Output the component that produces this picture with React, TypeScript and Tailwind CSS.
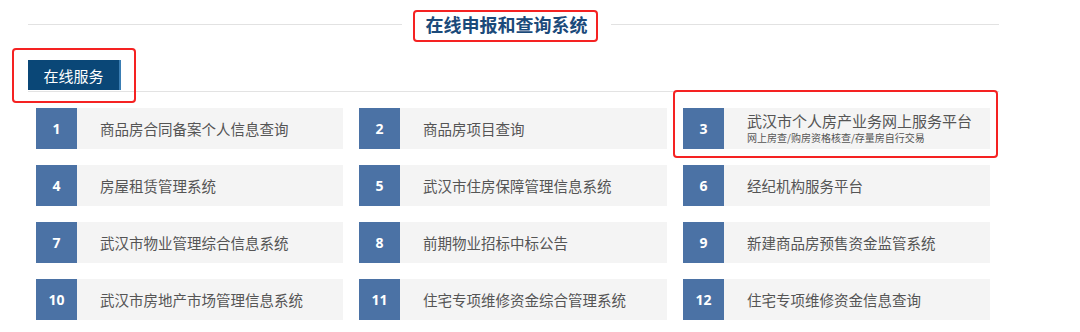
import React from "react";

const items: { n: number; t: string; sub?: string }[] = [
  { n: 1, t: "商品房合同备案个人信息查询" },
  { n: 2, t: "商品房项目查询" },
  { n: 3, t: "武汉市个人房产业务网上服务平台", sub: "网上房查/购房资格核查/存量房自行交易" },
  { n: 4, t: "房屋租赁管理系统" },
  { n: 5, t: "武汉市住房保障管理信息系统" },
  { n: 6, t: "经纪机构服务平台" },
  { n: 7, t: "武汉市物业管理综合信息系统" },
  { n: 8, t: "前期物业招标中标公告" },
  { n: 9, t: "新建商品房预售资金监管系统" },
  { n: 10, t: "武汉市房地产市场管理信息系统" },
  { n: 11, t: "住宅专项维修资金综合管理系统" },
  { n: 12, t: "住宅专项维修资金信息查询" },
];

export default function App() {
  return (
    <div
      className="relative w-[1080px] h-[332px] bg-white overflow-hidden"
      style={{ fontFamily: '"Microsoft YaHei", "Noto Sans CJK SC", "Noto Sans", sans-serif' }}
    >
      {/* Header */}
      <div className="flex items-center ml-[28px] w-[971px] pt-[12px] h-[36px]">
        <div className="w-[374px] h-px bg-[#e2e2e2]" />
        <div className="w-[209px] flex justify-center">
          <span className="text-[18px] leading-[24px] font-bold text-[#1b4a7a]">在线申报和查询系统</span>
        </div>
        <div className="flex-1 h-px bg-[#e2e2e2]" />
      </div>

      {/* Tab */}
      <div className="ml-[28px] w-[971px] mt-[24px] border-b border-[#e3e3e3]">
        <div className="w-[93px] h-[30px] bg-[#0a4777] border-r-2 border-[#3a7db3] flex items-center justify-center text-white text-[15px] leading-none mb-[1px]">
          在线服务
        </div>
      </div>

      {/* Grid */}
      <div className="ml-[36px] mt-[16px] grid grid-cols-[307px_308px_307px] gap-x-[16px] gap-y-[16px]">
        {items.map((it) => (
          <div key={it.n} className="flex h-[41px] bg-[#f4f4f4]">
            <div
              className="w-[41px] h-[41px] bg-[#4b72a5] flex items-center justify-center text-white text-[14px] font-bold"
              style={{ fontFamily: '"Open Sans", "Noto Sans", sans-serif' }}
            >
              {it.n}
            </div>
            {it.sub ? (
              <div className="pl-[23px] flex flex-col justify-center pb-[1px]">
                <div className="text-[15px] leading-[18px] text-[#555]">{it.t}</div>
                <div className="text-[10px] leading-[12px] mt-[2px] text-[#555]">{it.sub}</div>
              </div>
            ) : (
              <div className="pl-[23px] flex items-center text-[14.5px] text-[#555]">{it.t}</div>
            )}
          </div>
        ))}
      </div>

      {/* Red annotation boxes */}
      <div className="absolute left-[413px] top-[10px] w-[185px] h-[32px] border-2 border-[#f52222] rounded-[4px]" />
      <div className="absolute left-[12px] top-[48px] w-[124px] h-[55px] border-2 border-[#f52222] rounded-[4px]" />
      <div className="absolute left-[673px] top-[90px] w-[325px] h-[68px] border-2 border-[#f52222] rounded-[4px]" />
    </div>
  );
}
